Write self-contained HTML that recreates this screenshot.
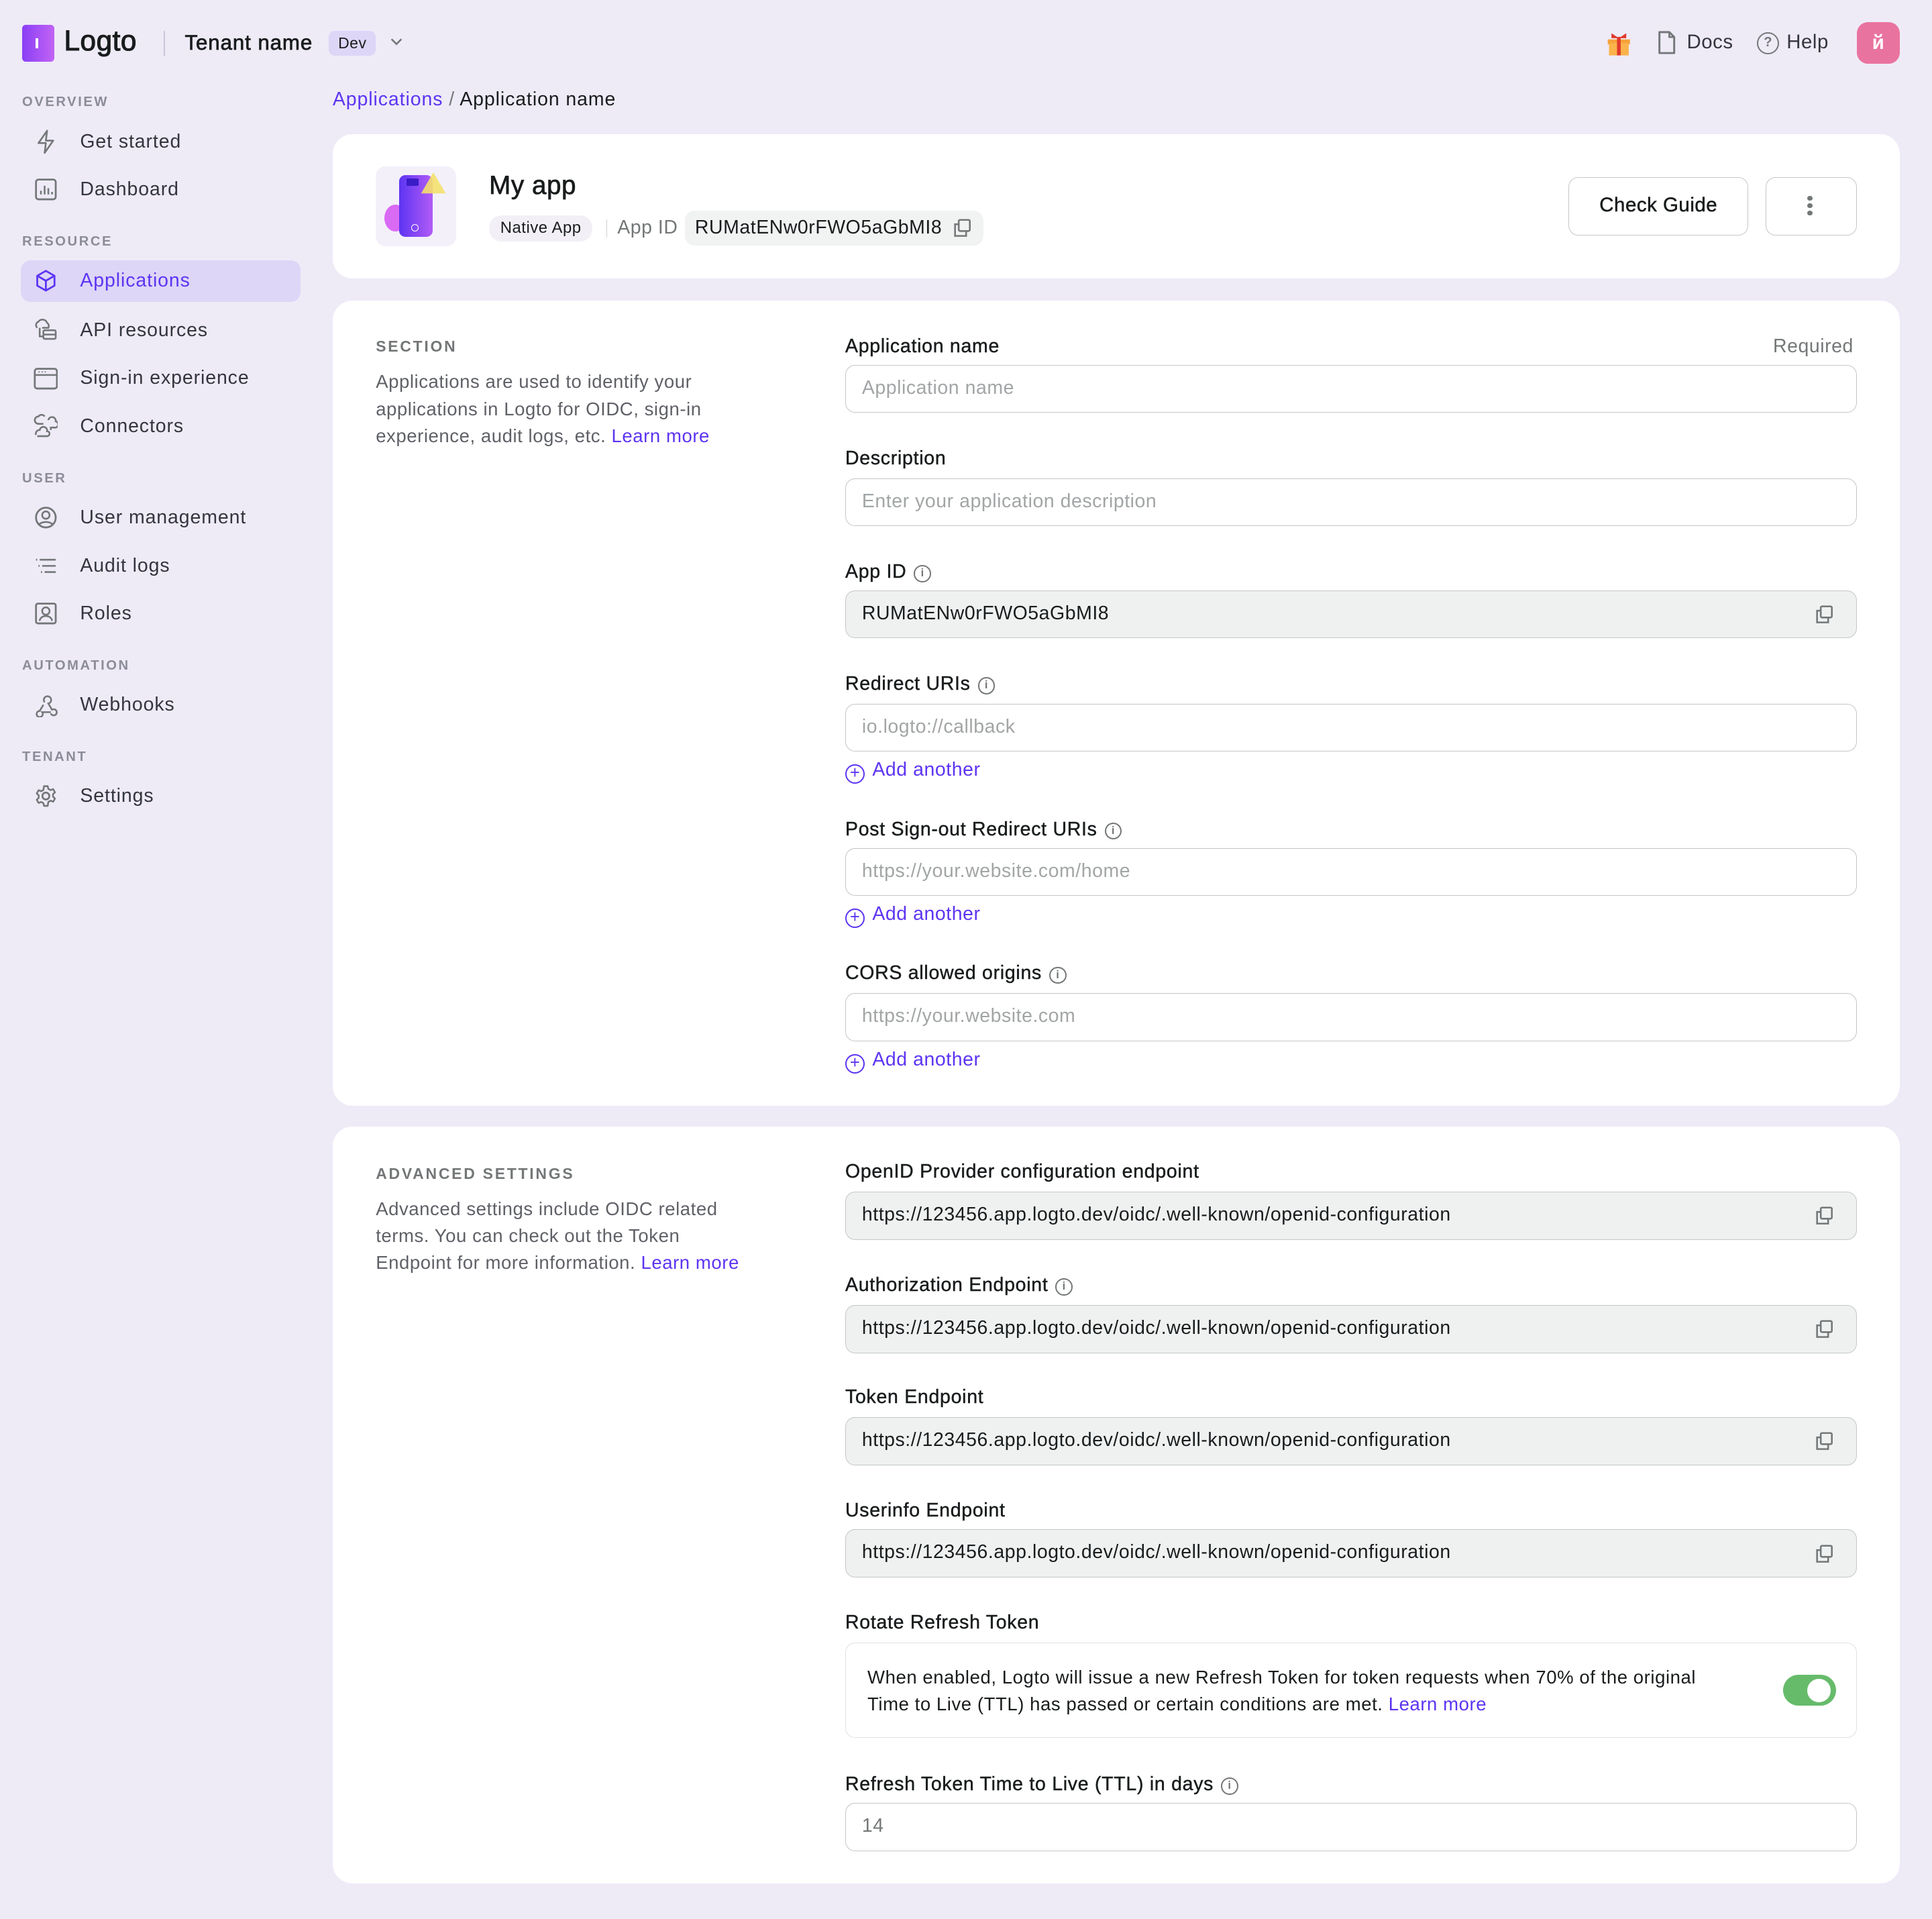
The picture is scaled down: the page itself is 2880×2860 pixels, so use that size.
<!DOCTYPE html>
<html><head><meta charset="utf-8"><style>
*{box-sizing:border-box;margin:0;padding:0}
html,body{width:2880px;height:2860px;overflow:hidden;background:#eeebf7}
#r{zoom:1.83673;width:1568px;height:1557px;position:relative;font-family:"Liberation Sans",sans-serif;color:#191c1d;background:#eeebf7;letter-spacing:0.3px}
.a{position:absolute;white-space:nowrap}
.sec{position:absolute;left:18px;font-size:11px;letter-spacing:1.4px;color:#8c8c99;font-weight:bold}
.item{position:absolute;left:65px;font-size:15.5px;color:#34353f;letter-spacing:0.5px}
.ic{position:absolute;left:27px;width:20px;height:20px}
.card{position:absolute;left:270px;width:1272px;background:#fff;border-radius:16px}
.lbl{position:absolute;left:686px;font-size:15.5px;color:#191c1d;letter-spacing:0.4px;-webkit-text-stroke:0.25px #191c1d}
.inp{position:absolute;left:686px;width:821px;height:39px;border:1px solid #c4c7c7;border-radius:8px;padding-left:13px;line-height:37px;font-size:15.5px;color:#a2a5a6}
.ro{background:#eff1f1;color:#191c1d}
.add{position:absolute;left:686px;font-size:15.5px;color:#5d34f2}
.lt{position:absolute;left:305px;width:310px;font-size:15px;line-height:22px;color:#5f6167}
.st{position:absolute;left:305px;font-size:12.5px;letter-spacing:1.5px;font-weight:bold;color:#747778}
a{color:#5d34f2;text-decoration:none}
.cp{position:absolute;right:18px;top:11px}
.info{display:inline-block;width:14px;height:14px;border:1.3px solid #747778;border-radius:50%;font-size:9px;line-height:11px;text-align:center;color:#747778;vertical-align:1px;margin-left:6px;font-weight:bold;-webkit-text-stroke:0}
.plus{display:inline-block;width:16px;height:16px;border:1.4px solid #5d34f2;border-radius:50%;font-size:14px;line-height:12px;text-align:center;vertical-align:-2px;margin-right:6px}
</style></head><body><div id="r">
<!-- header -->
<div class="a" style="left:18px;top:20px;width:26px;height:30px;border-radius:3px;background:linear-gradient(90deg,#8a3ff5,#c264f5)"></div>
<div class="a" style="left:29px;top:31px;width:2px;height:8px;background:#fff"></div>
<div class="a" style="left:52px;top:20px;font-size:23px;color:#191c1d;-webkit-text-stroke:0.6px #191c1d">Logto</div>
<div class="a" style="left:133px;top:25px;width:1px;height:20px;background:#c9c5d6"></div>
<div class="a" style="left:150px;top:25px;font-size:17px;letter-spacing:0.5px;-webkit-text-stroke:0.4px #191c1d">Tenant name</div>
<div class="a" style="left:267px;top:25px;width:38px;height:20px;background:#ddd6f7;border-radius:5px;font-size:12.5px;text-align:center;line-height:20px">Dev</div>
<svg class="a" style="left:316px;top:28px" width="12" height="12" viewBox="0 0 12 12"><path d="M2 4l4 4 4-4" stroke="#747778" stroke-width="1.4" fill="none"/></svg>
<svg class="a" style="left:1303px;top:24px" width="22" height="22" viewBox="0 0 22 22"><rect x="2" y="8" width="18" height="4" fill="#f7a23a"/><rect x="3" y="11" width="16" height="10" fill="#fbb34b"/><rect x="9.5" y="6" width="3" height="15" fill="#e0392c"/><path d="M11 7L5 3v4zM11 7l6-4v4z" fill="#e0392c"/></svg>
<svg class="a" style="left:1345px;top:25px" width="16" height="20" viewBox="0 0 16 20"><path d="M2 1h8l4 4v13H2z" stroke="#747778" stroke-width="1.6" fill="none" stroke-linejoin="round"/><path d="M10 1v4h4" stroke="#747778" stroke-width="1.4" fill="none"/></svg>
<div class="a" style="left:1369px;top:25px;font-size:16px;color:#34353f">Docs</div>
<div class="a" style="left:1426px;top:26px;width:18px;height:18px;border:1.6px solid #747778;border-radius:50%;font-size:11px;text-align:center;line-height:15px;color:#747778;font-weight:bold">?</div>
<div class="a" style="left:1450px;top:25px;font-size:16px;color:#34353f">Help</div>
<div class="a" style="left:1507px;top:18px;width:35px;height:34px;border-radius:9px;background:#e9739f;color:#fff;font-size:16px;font-weight:bold;text-align:center;line-height:34px">й</div>
<!-- sidebar -->
<div class="sec" style="top:77px">OVERVIEW</div>
<svg class="ic" style="top:105px" viewBox="0 0 20 20"><path d="M11 1L4 11h6l-1 8 7-10h-6z" stroke="#747778" stroke-width="1.4" fill="none" stroke-linejoin="round"/></svg>
<div class="item" style="top:106px">Get started</div>
<svg class="ic" style="top:144px" viewBox="0 0 20 20"><rect x="2" y="2" width="16" height="16" rx="2" stroke="#747778" stroke-width="1.5" fill="none"/><path d="M6 14v-3M9 14V7M12 14v-5M15 14v-2" stroke="#747778" stroke-width="1.4"/></svg>
<div class="item" style="top:145px">Dashboard</div>
<div class="sec" style="top:190px">RESOURCE</div>
<div class="a" style="left:17px;top:211px;width:227px;height:34px;border-radius:8px;background:#ddd6f7"></div>
<svg class="ic" style="top:218px" viewBox="0 0 20 20"><path d="M10 2l7 4v8l-7 4-7-4V6zM3 6l7 4 7-4M10 10v8" stroke="#5d34f2" stroke-width="1.5" fill="none" stroke-linejoin="round"/></svg>
<div class="item" style="top:219px;color:#5d34f2">Applications</div>
<svg class="ic" style="top:257px" viewBox="0 0 20 20"><path d="M3 9a3 3 0 0 1 1-5 4 4 0 0 1 7 1 3 3 0 0 1 1 4H7" stroke="#747778" stroke-width="1.4" fill="none"/><rect x="8" y="11" width="10" height="7" rx="1" stroke="#747778" stroke-width="1.4" fill="none"/><path d="M8 14.5h10M5 9v7h3" stroke="#747778" stroke-width="1.4" fill="none"/></svg>
<div class="item" style="top:259px">API resources</div>
<svg class="ic" style="top:297px" viewBox="0 0 20 20"><rect x="1" y="2" width="18" height="16" rx="2" stroke="#747778" stroke-width="1.5" fill="none"/><path d="M1 7h18" stroke="#747778" stroke-width="1.4"/><path d="M4 4.5h1M6.5 4.5h1M9 4.5h1" stroke="#747778" stroke-width="1"/></svg>
<div class="item" style="top:298px">Sign-in experience</div>
<svg class="ic" style="top:336px" viewBox="0 0 20 20"><path d="M8 8H4a3 3 0 0 1 0-6 3 3 0 0 1 5 0M12 5a3 3 0 0 1 6 1 2.5 2.5 0 0 1-1 5h-3v2M2 17a3 3 0 0 1 3-4 3 3 0 0 1 6 1 2 2 0 0 1 0 4H3" stroke="#747778" stroke-width="1.4" fill="none"/></svg>
<div class="item" style="top:337px">Connectors</div>
<div class="sec" style="top:382px">USER</div>
<svg class="ic" style="top:410px" viewBox="0 0 20 20"><circle cx="10" cy="10" r="8" stroke="#747778" stroke-width="1.5" fill="none"/><circle cx="10" cy="8" r="3" stroke="#747778" stroke-width="1.4" fill="none"/><path d="M4.5 15.5a7 5 0 0 1 11 0" stroke="#747778" stroke-width="1.4" fill="none"/></svg>
<div class="item" style="top:411px">User management</div>
<svg class="ic" style="top:449px" viewBox="0 0 20 20"><path d="M2 5h1M5 5h13M4 10h1M7 10h11M6 15h1M9 15h9" stroke="#747778" stroke-width="1.4"/></svg>
<div class="item" style="top:450px">Audit logs</div>
<svg class="ic" style="top:488px" viewBox="0 0 20 20"><rect x="2" y="2" width="16" height="16" rx="1.5" stroke="#747778" stroke-width="1.5" fill="none"/><circle cx="10" cy="8" r="3" stroke="#747778" stroke-width="1.4" fill="none"/><path d="M5 16a5 4 0 0 1 10 0" stroke="#747778" stroke-width="1.4" fill="none"/></svg>
<div class="item" style="top:489px">Roles</div>
<div class="sec" style="top:534px">AUTOMATION</div>
<svg class="ic" style="top:562px" viewBox="0 0 20 20"><path d="M8 10l-3 5a2.5 2.5 0 1 0 2 1h7M9 8a3 3 0 1 1 3 1l3 5a2.5 2.5 0 1 1-1 3" stroke="#747778" stroke-width="1.4" fill="none"/></svg>
<div class="item" style="top:563px">Webhooks</div>
<div class="sec" style="top:608px">TENANT</div>
<svg class="ic" style="top:636px" viewBox="0 0 20 20"><circle cx="10" cy="10" r="2.8" stroke="#747778" stroke-width="1.5" fill="none"/><path d="M8.5 2h3l.5 2.2 1.8 1 2.1-.8 1.5 2.6-1.6 1.5v2l1.6 1.5-1.5 2.6-2.1-.8-1.8 1L11.5 18h-3L8 15.8l-1.8-1-2.1.8-1.5-2.6L4.2 11.5v-2L2.6 7.9 4.1 5.3l2.1.8 1.8-1z" stroke="#747778" stroke-width="1.4" fill="none" stroke-linejoin="round"/></svg>
<div class="item" style="top:637px">Settings</div>
<!-- breadcrumb -->
<div class="a" style="left:270px;top:72px;font-size:15.5px;letter-spacing:0.5px"><a>Applications</a> <span style="color:#747778">/</span> Application name</div>
<!-- card1 -->
<div class="card" style="top:109px;height:117px"></div>
<div class="a" style="left:305px;top:135px;width:65px;height:65px;border-radius:8px;background:#f3f0fa"></div>
<div class="a" style="left:312px;top:166px;width:18px;height:22px;border-radius:50%;background:#d96af3"></div>
<div class="a" style="left:324px;top:142px;width:27px;height:50px;border-radius:5px;background:linear-gradient(90deg,#5d34f2,#b25cf6)"></div>
<div class="a" style="left:330px;top:145px;width:10px;height:6px;background:#3a1cc7;border-radius:1px"></div>
<svg class="a" style="left:340px;top:140px" width="24" height="20"><path d="M12 0L2 17h20z" fill="#f4e06c" opacity=".9"/></svg>
<div class="a" style="left:334px;top:182px;width:6px;height:6px;border:1px solid #fff;border-radius:50%"></div>
<div class="a" style="left:397px;top:139px;font-size:21px;-webkit-text-stroke:0.4px #191c1d">My app</div>
<div class="a" style="left:397px;top:175px;height:21px;padding:0 9px;border-radius:10px;background:#f2f0f6;font-size:13px;line-height:21px">Native App</div>
<div class="a" style="left:492px;top:178px;width:1px;height:15px;background:#d0d0d8"></div>
<div class="a" style="left:501px;top:176px;font-size:15.5px;color:#747778">App ID</div>
<div class="a" style="left:556px;top:171px;width:242px;height:28px;border-radius:8px;background:#f1f2f2;padding-left:8px;font-size:15.5px;line-height:28px">RUMatENw0rFWO5aGbMI8</div>
<svg class="a" style="left:773px;top:177px" width="16" height="16" viewBox="0 0 16 16"><rect x="5" y="1.5" width="9" height="9" rx="1" stroke="#747778" stroke-width="1.4" fill="none"/><path d="M5 5H2v9.5h9V11" stroke="#747778" stroke-width="1.4" fill="none"/></svg>
<div class="a" style="left:1273px;top:144px;width:146px;height:47px;border:1px solid #c4c7c7;border-radius:8px;text-align:center;line-height:45px;font-size:16px;-webkit-text-stroke:0.3px #191c1d">Check Guide</div>
<div class="a" style="left:1433px;top:144px;width:74px;height:47px;border:1px solid #c4c7c7;border-radius:8px"></div>
<div class="a" style="left:1467px;top:159px;width:4px;height:4px;border-radius:50%;background:#747778;box-shadow:0 6px 0 #747778,0 12px 0 #747778"></div>
<!-- card2 -->
<div class="card" style="top:244px;height:653px"></div>
<div class="st" style="top:274px">SECTION</div>
<div class="lt" style="top:299px">Applications are used to identify your applications in Logto for OIDC, sign-in experience, audit logs, etc. <a>Learn more</a></div>
<div class="lbl" style="top:272px">Application name</div>
<div class="a" style="left:1439px;top:272px;font-size:15.5px;color:#747778">Required</div>
<div class="inp" style="top:296px">Application name</div>
<div class="lbl" style="top:363px">Description</div>
<div class="inp" style="top:388px">Enter your application description</div>
<div class="lbl" style="top:455px">App ID<span class="info">i</span></div>
<div class="inp ro" style="top:479px">RUMatENw0rFWO5aGbMI8<svg class="cp" width="16" height="16" viewBox="0 0 16 16"><rect x="5" y="1.5" width="9" height="9" rx="1" stroke="#747778" stroke-width="1.4" fill="none"/><path d="M5 5H2v9.5h9V11" stroke="#747778" stroke-width="1.4" fill="none"/></svg></div>
<div class="lbl" style="top:546px">Redirect URIs<span class="info">i</span></div>
<div class="inp" style="top:571px">io.logto://callback</div>
<div class="add" style="top:616px"><span class="plus">+</span>Add another</div>
<div class="lbl" style="top:664px">Post Sign-out Redirect URIs<span class="info">i</span></div>
<div class="inp" style="top:688px">https://your.website.com/home</div>
<div class="add" style="top:733px"><span class="plus">+</span>Add another</div>
<div class="lbl" style="top:781px">CORS allowed origins<span class="info">i</span></div>
<div class="inp" style="top:806px">https://your.website.com</div>
<div class="add" style="top:851px"><span class="plus">+</span>Add another</div>
<!-- card3 -->
<div class="card" style="top:914px;height:614px"></div>
<div class="st" style="top:945px">ADVANCED SETTINGS</div>
<div class="lt" style="top:970px;width:300px">Advanced settings include OIDC related terms. You can check out the Token Endpoint for more information. <a>Learn more</a></div>
<div class="lbl" style="top:942px">OpenID Provider configuration endpoint</div>
<div class="inp ro" style="top:967px">https://123456.app.logto.dev/oidc/.well-known/openid-configuration<svg class="cp" width="16" height="16" viewBox="0 0 16 16"><rect x="5" y="1.5" width="9" height="9" rx="1" stroke="#747778" stroke-width="1.4" fill="none"/><path d="M5 5H2v9.5h9V11" stroke="#747778" stroke-width="1.4" fill="none"/></svg></div>
<div class="lbl" style="top:1034px">Authorization Endpoint<span class="info">i</span></div>
<div class="inp ro" style="top:1059px">https://123456.app.logto.dev/oidc/.well-known/openid-configuration<svg class="cp" width="16" height="16" viewBox="0 0 16 16"><rect x="5" y="1.5" width="9" height="9" rx="1" stroke="#747778" stroke-width="1.4" fill="none"/><path d="M5 5H2v9.5h9V11" stroke="#747778" stroke-width="1.4" fill="none"/></svg></div>
<div class="lbl" style="top:1125px">Token Endpoint</div>
<div class="inp ro" style="top:1150px">https://123456.app.logto.dev/oidc/.well-known/openid-configuration<svg class="cp" width="16" height="16" viewBox="0 0 16 16"><rect x="5" y="1.5" width="9" height="9" rx="1" stroke="#747778" stroke-width="1.4" fill="none"/><path d="M5 5H2v9.5h9V11" stroke="#747778" stroke-width="1.4" fill="none"/></svg></div>
<div class="lbl" style="top:1217px">Userinfo Endpoint</div>
<div class="inp ro" style="top:1241px">https://123456.app.logto.dev/oidc/.well-known/openid-configuration<svg class="cp" width="16" height="16" viewBox="0 0 16 16"><rect x="5" y="1.5" width="9" height="9" rx="1" stroke="#747778" stroke-width="1.4" fill="none"/><path d="M5 5H2v9.5h9V11" stroke="#747778" stroke-width="1.4" fill="none"/></svg></div>
<div class="lbl" style="top:1308px">Rotate Refresh Token</div>
<div class="a" style="left:686px;top:1333px;width:821px;height:77px;border:1px solid #dfe1e1;border-radius:8px"></div>
<div class="a" style="left:704px;top:1350px;font-size:15px;line-height:22px;white-space:normal;width:700px">When enabled, Logto will issue a new Refresh Token for token requests when 70% of the original Time to Live (TTL) has passed or certain conditions are met. <a>Learn more</a></div>
<div class="a" style="left:1447px;top:1359px;width:43px;height:25px;border-radius:13px;background:#66bb6a"></div>
<div class="a" style="left:1467px;top:1362px;width:19px;height:19px;border-radius:50%;background:#fff"></div>
<div class="lbl" style="top:1439px">Refresh Token Time to Live (TTL) in days<span class="info">i</span></div>
<div class="inp" style="top:1463px;color:#747778">14</div>
</div></body></html>
